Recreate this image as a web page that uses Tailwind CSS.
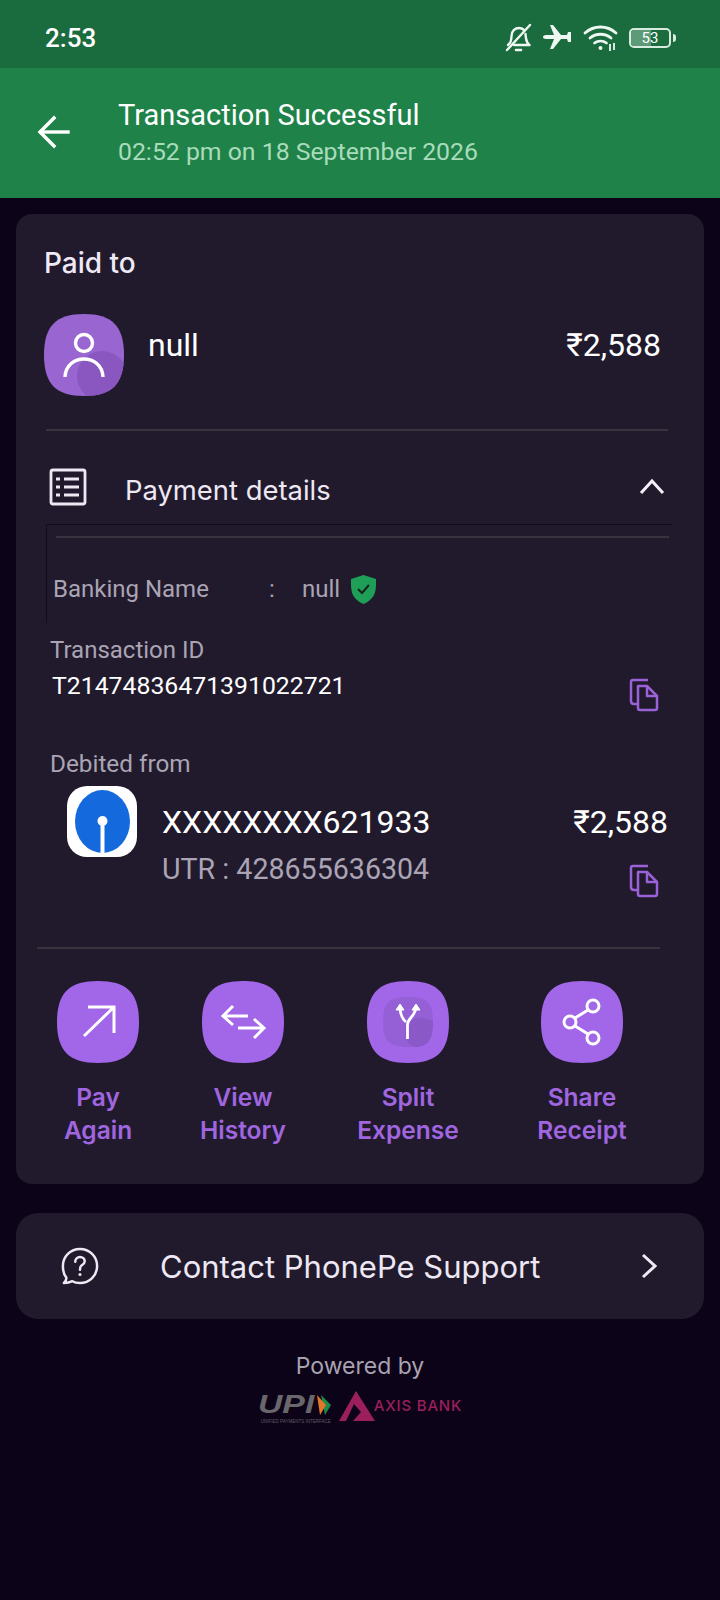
<!DOCTYPE html>
<html lang="en">
<head>
<meta charset="UTF-8">
<meta name="viewport" content="width=device-width, initial-scale=1.0">
<title>Transaction Successful</title>
<script src="https://cdn.jsdelivr.net/npm/@tailwindcss/browser@4"></script>
</head>
<body class="w-[720px] h-[1600px] overflow-hidden bg-[#0d0318] font-['Inter',sans-serif]">

  <!-- status bar -->
  <div class="h-[68px] pt-[8px] bg-[#1a6b3e] flex items-center justify-between pl-[45px] pr-[44px] font-['Roboto',sans-serif] text-white">
    <span class="text-[26px] font-medium leading-none">2:53</span>
    <div class="flex items-center gap-[11px]">
      <svg class="mr-[-2px]" width="28" height="30" viewBox="0 0 28 30" fill="none" stroke="#eef7f1" stroke-width="2.4" stroke-linecap="round" stroke-linejoin="round">
        <path d="M3 22c3-2 3.500-5 3.500-9 0-5 3.500-8 7.500-8 2 0 3.500.6 5 2M20.500 11c.5 5 .5 8.500 4 11H9"/>
        <path d="M2 27 25 2"/>
        <path d="M11 27h5" stroke-width="2.600"/>
      </svg>
      <svg width="30" height="28" viewBox="0 0 30 28" fill="#eef7f1">
        <path d="M1 14c0-1 1-2 3-2h8L8 2h3l8 10h6l1-3h3v10h-3l-1-3h-6l-8 10H8l4-10H4c-2 0-3-1-3-2z" transform="translate(0 -1)"/>
      </svg>
      <svg width="35" height="28" viewBox="0 0 35 28" fill="none" stroke="#eef7f1" stroke-width="2.800" stroke-linecap="round">
        <path d="M2 9c9-8 22-8 31 0"/>
        <path d="M7 14c6-5 15-5 21 0"/>
        <path d="M11.500 19c3.500-2.600 8.500-2.600 12 0"/>
        <circle cx="17.500" cy="24" r="2" fill="#eef7f1" stroke="none"/>
        <path d="M27 20v7M31 19v7" stroke-width="1.800" stroke-linecap="butt"/>
      </svg>
      <div class="flex items-center gap-[2px]">
        <div class="relative w-[42px] h-[20px] rounded-[5px] border-2 border-[#d8ebdf] overflow-hidden">
          <div class="absolute left-0 top-0 bottom-0 w-[20px] bg-[#5d9a77]"></div>
          <span class="absolute inset-0 flex items-center justify-center text-[15px] text-white leading-none">53</span>
        </div>
        <div class="w-[3px] h-[8px] rounded-r bg-[#d8ebdf]"></div>
      </div>
    </div>
  </div>

  <!-- header -->
  <div class="h-[130px] bg-[#1f8249] flex items-center font-['Roboto',sans-serif]">
    <svg class="ml-[37px] mt-[-2px]" width="34" height="34" viewBox="0 0 34 34" fill="none" stroke="white" stroke-width="3.400" stroke-linecap="square" stroke-linejoin="miter">
      <path d="M31 17H4"/>
      <path d="M17 3 3 17l14 14"/>
    </svg>
    <div class="ml-[47px] mt-[1px]">
      <div class="text-[29px] leading-[37px] text-white">Transaction Successful</div>
      <div class="text-[24.800px] leading-[36px] text-[#a9dcbb]">02:52 pm on 18 September 2026</div>
    </div>
  </div>

  <!-- main card -->
  <div class="mx-[16px] mt-[16px] h-[970px] rounded-[16px] bg-[#211a2c] pt-[31px]">
    <div class="pl-[28px] h-[36px] text-[28px] leading-[36px] font-medium text-[#efe9f6]">Paid to</div>

    <div class="mt-[33px] pl-[28px] pr-[43px] flex items-start">
      <svg width="80" height="82" viewBox="0 0 80 82">
        <defs><clipPath id="av"><path d="M40 0C68 0 80 12 80 41S68 82 40 82 0 70 0 41 12 0 40 0Z"/></clipPath></defs>
        <path d="M40 0C68 0 80 12 80 41S68 82 40 82 0 70 0 41 12 0 40 0Z" fill="#9966d1"/>
        <circle cx="58" cy="62" r="25" fill="#8a56c0" clip-path="url(#av)"/>
        <circle cx="40" cy="29" r="8.500" fill="none" stroke="white" stroke-width="3.400"/>
        <path d="M21 63c1-24 37-24 38 0" fill="none" stroke="white" stroke-width="3.400"/>
      </svg>
      <div class="ml-[24px] mt-[11px] text-[32px] leading-[40px] text-white font-['Roboto',sans-serif]">null</div>
      <div class="ml-auto mt-[11px] text-[32px] leading-[40px] text-white font-['Roboto',sans-serif]">₹2,588</div>
    </div>

    <div class="mt-[33px] ml-[30px] mr-[36px] h-[2px] bg-[#39333f]"></div>

    <div class="mt-[38px] pl-[33px] pr-[39px] h-[40px] flex items-center">
      <svg class="mt-[-4px]" width="38" height="38" viewBox="0 0 38 38" fill="none" stroke="#eee8f4" stroke-width="2.800">
        <rect x="2" y="2" width="34" height="34" rx="2"/>
        <path d="M15 11h15M15 19h15M15 27h15"/>
        <path d="M7 11h4M7 19h4M7 27h4" stroke-width="3"/>
      </svg>
      <span class="ml-[38px] mt-[4px] text-[27.400px] text-[#eee8f4] leading-none">Payment details</span>
      <svg class="ml-auto mt-[-6px]" width="26" height="16" viewBox="0 0 26 16" fill="none" stroke="#f3eef8" stroke-width="3">
        <path d="M2 15 13 3l11 12"/>
      </svg>
    </div>

    <!-- details box -->
    <div class="mt-[15px] ml-[30px] mr-[32px] h-[99px] border-t border-l border-[#120c1a] pt-[11px] pl-[9px]">
      <div class="mr-[3px] h-[2px] bg-[#39333f]"></div>
      <div class="mt-[36px] h-[30px] flex items-center text-[24px] font-['Roboto',sans-serif] text-[#aaa4b4]">
        <span class="ml-[-3px] w-[216px]">Banking Name</span>
        <span class="w-[33px]">:</span>
        <span>null</span>
        <svg class="ml-[11px]" width="25" height="29" viewBox="0 0 25 29">
          <path d="M12.500 0 25 4c0 10 1 19-12.500 25C-1 23 0 14 0 4z" fill="#1f9e57"/>
          <path d="M7 14l4 4 7-8" fill="none" stroke="#14251d" stroke-width="2"/>
        </svg>
      </div>
    </div>

    <div class="ml-[34px] mr-[45px] mt-[11px] flex items-start font-['Roboto',sans-serif]">
      <div>
        <div class="text-[24px] leading-[32px] text-[#aaa4b4]">Transaction ID</div>
        <div class="mt-[4px] ml-[2px] text-[24.800px] leading-[32px] text-white">T21474836471391022721</div>
      </div>
      <svg class="ml-auto mt-[44px]" width="30" height="34" viewBox="0 0 30 34" fill="none" stroke="#9a62d6" stroke-width="2.500" stroke-linejoin="round">
        <path d="M9 8h9l10 10v12a2 2 0 0 1-2 2H11a2 2 0 0 1-2-2z"/>
        <path d="M18 8v10h10"/>
        <path d="M19 2H4a2 2 0 0 0-2 2v19c0 2 1 3 3 3h4"/>
      </svg>
    </div>

    <div class="ml-[34px] mt-[36px] text-[24.300px] leading-[32px] text-[#aaa4b4] font-['Roboto',sans-serif]">Debited from</div>

    <div class="mt-[6px] ml-[51px] mr-[36px] flex items-start font-['Roboto',sans-serif]">
      <div class="w-[70px] h-[71px] rounded-[20px] bg-white flex items-center justify-center">
        <svg width="55" height="63" viewBox="0 0 55 63">
          <ellipse cx="27.500" cy="31.500" rx="27.500" ry="31.500" fill="#1469dd"/>
          <circle cx="27.500" cy="31" r="5" fill="white"/>
          <rect x="25.500" y="31" width="4" height="32" fill="white"/>
        </svg>
      </div>
      <div class="ml-[25px] mt-[16px]">
        <div class="text-[32px] leading-[40px] text-white">XXXXXXXX621933</div>
        <div class="mt-[7px] text-[28.600px] leading-[40px] text-[#aaa4b4]">UTR : 428655636304</div>
      </div>
      <div class="ml-auto mt-[16px] flex flex-col items-end">
        <div class="text-[32px] leading-[40px] text-white">₹2,588</div>
        <svg class="mt-[22px] mr-[9px]" width="30" height="34" viewBox="0 0 30 34" fill="none" stroke="#9a62d6" stroke-width="2.500" stroke-linejoin="round">
          <path d="M9 8h9l10 10v12a2 2 0 0 1-2 2H11a2 2 0 0 1-2-2z"/>
          <path d="M18 8v10h10"/>
          <path d="M19 2H4a2 2 0 0 0-2 2v19c0 2 1 3 3 3h4"/>
        </svg>
      </div>
    </div>

    <div class="mt-[49px] ml-[21px] mr-[44px] h-[2px] bg-[#39333f]"></div>

    <!-- actions -->
    <div class="mt-[32px] relative h-[170px] text-[24.500px] leading-[33px] font-semibold text-[#a066e0] text-center">
      <div class="absolute left-[22px] w-[120px] flex flex-col items-center">
        <svg width="82" height="82" viewBox="0 0 82 82">
          <path d="M41 0C70 0 82 12 82 41S70 82 41 82 0 70 0 41 12 0 41 0Z" fill="#a266e8"/>
          <path d="M27 55 57 26M31 26h26v26" fill="none" stroke="white" stroke-width="3"/>
        </svg>
        <div class="mt-[18px]">Pay<br>Again</div>
      </div>
      <div class="absolute left-[167px] w-[120px] flex flex-col items-center">
        <svg width="82" height="82" viewBox="0 0 82 82">
          <path d="M41 0C70 0 82 12 82 41S70 82 41 82 0 70 0 41 12 0 41 0Z" fill="#a266e8"/>
          <path d="M22 35H46M31 25l-10 10 10 9M36 47h25M52 38l10 9-10 10" fill="none" stroke="white" stroke-width="3"/>
        </svg>
        <div class="mt-[18px]">View<br>History</div>
      </div>
      <div class="absolute left-[332px] w-[120px] flex flex-col items-center">
        <svg width="82" height="82" viewBox="0 0 82 82">
          <path d="M41 0C70 0 82 12 82 41S70 82 41 82 0 70 0 41 12 0 41 0Z" fill="#a266e8"/>
          <path d="M41 16C60 16 66 22 66 41S60 66 41 66 16 60 16 41 22 16 41 16Z" fill="#9560d6"/>
          <path d="M66 41C66 60 60 66 48 66 41 64 38 58 38 51 38 42 45 37 52 37 58 37 63 38 66 41Z" fill="#8b58c8"/>
          <path d="M40.500 58V44C40.500 36 49 36 49 25M39 41C34 37 33 32 33 25" fill="none" stroke="white" stroke-width="2.800"/>
          <path d="M29 29l4-6 4 6zM45 29l4-6 4 6z" fill="white" stroke="white" stroke-width="1"/>
        </svg>
        <div class="mt-[18px]">Split<br>Expense</div>
      </div>
      <div class="absolute left-[506px] w-[120px] flex flex-col items-center">
        <svg width="82" height="82" viewBox="0 0 82 82">
          <path d="M41 0C70 0 82 12 82 41S70 82 41 82 0 70 0 41 12 0 41 0Z" fill="#a266e8"/>
          <g fill="none" stroke="white" stroke-width="3">
            <circle cx="29" cy="41" r="6"/>
            <circle cx="52" cy="25" r="6"/>
            <circle cx="52" cy="57" r="6"/>
            <path d="M34 37 47 29M34 45 47 53"/>
          </g>
        </svg>
        <div class="mt-[18px]">Share<br>Receipt</div>
      </div>
    </div>
  </div>

  <!-- support -->
  <div class="mx-[16px] mt-[29px] h-[106px] rounded-[22px] bg-[#211a2c] flex items-center pl-[45px] pr-[47px]">
    <svg width="38" height="40" viewBox="0 0 40 40" fill="none" stroke="#eee8f4" stroke-width="2.600">
      <path d="M20 2c10 0 18 8 18 18s-8 18-18 18c-3 0-6-.7-8-2-2 1-5 2-9 2 2-2 3-4 2.500-6C3 29 2 25 2 20 2 10 10 2 20 2z" stroke-linejoin="round"/>
      <path d="M15 15.500c0-3 2.300-5 5-5s5 2 5 4.500-2 3.500-3.500 4.500S20 21 20 24" stroke-linecap="round"/>
      <circle cx="20" cy="29" r="1.600" fill="#eee8f4" stroke="none"/>
    </svg>
    <span class="ml-[61px] text-[31px] leading-none text-[#eee8f4]">Contact PhonePe Support</span>
    <svg class="ml-auto" width="16" height="26" viewBox="0 0 16 26" fill="none" stroke="#eee8f4" stroke-width="3">
      <path d="M2 2l12 11L2 24"/>
    </svg>
  </div>

  <!-- footer -->
  <div class="mt-[33px] text-center text-[23px] leading-[28px] text-[#a8a2b2]">Powered by</div>
  <div class="mt-[11px] flex items-start justify-center">
    <div class="relative w-[78px] h-[33px] font-['Liberation_Sans',sans-serif]">
      <span class="absolute left-0 top-[2px] text-[25px] leading-[22px] font-bold italic origin-left scale-x-[1.35] text-[#69676c]">UPI</span>
      <svg class="absolute left-[57px] top-[4px]" width="16" height="20" viewBox="0 0 16 20">
        <path d="M6 0l10 10L10 20z" fill="#1d8a4a"/>
        <path d="M2 0l9 10-6 10z" fill="#e2772a"/>
      </svg>
      <span class="absolute left-[3px] top-[28px] text-[4.500px] leading-[5px] whitespace-nowrap text-[#5e5c62]">UNIFIED PAYMENTS INTERFACE</span>
    </div>
    <svg class="ml-[3px]" width="36" height="30" viewBox="0 0 36 30">
      <path d="M17 0 36 30H14L22 21 15 13 7 30H0z" fill="#9b1f5c"/>
    </svg>
    <span class="mt-[5px] ml-[-1px] text-[15px] leading-[20px] font-medium tracking-[.8px] text-[#9b1f5c]">AXIS BANK</span>
  </div>

</body>
</html>
